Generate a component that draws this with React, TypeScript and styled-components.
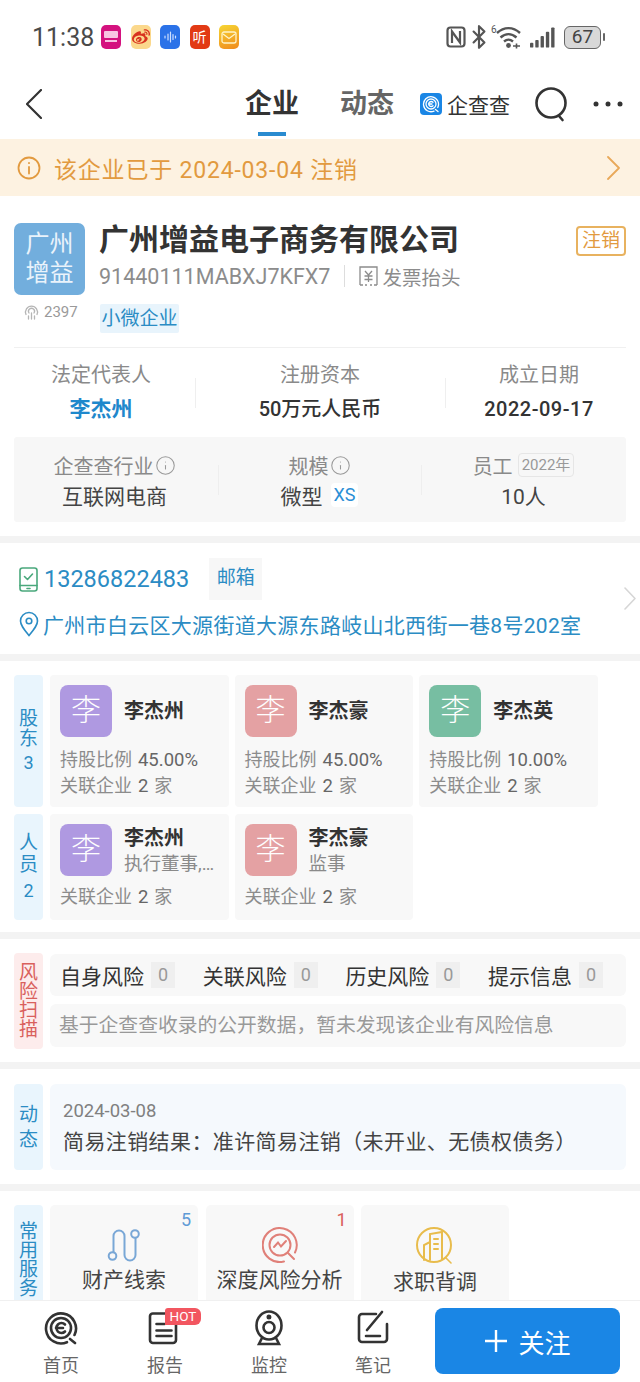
import React from 'react';
import styled, { createGlobalStyle } from 'styled-components';
import { Info, Bluetooth } from 'lucide-react';
import { FaWeibo } from 'react-icons/fa';

const GlobalStyle = createGlobalStyle`
  html, body {
    margin: 0;
    padding: 0;
    background: #ffffff;
  }
  * {
    box-sizing: border-box;
  }
`;

const Page = styled.div`
  width: 640px;
  height: 1382px;
  display: flex;
  flex-direction: column;
  overflow: hidden;
  background: #ffffff;
  font-family: Roboto, "Noto Sans CJK SC", sans-serif;
  color: #333333;
`;

const StatusBar = styled.div`
  height: 70px;
  flex: none;
  display: flex;
  align-items: center;
  padding: 4px 0 0 32px;
`;

const Clock = styled.span`
  font-size: 25px;
  color: #4a4a4a;
  width: 69px;
`;

const AppIcon = styled.span<{ $bg: string }>`
  width: 20px;
  height: 24px;
  margin-right: 9.5px;
  border-radius: 5px;
  background: ${(p) => p.$bg};
  display: flex;
  align-items: center;
  justify-content: center;
  color: #ffffff;
  font-size: 14px;
  line-height: 1;
  overflow: hidden;
`;

const StatusRight = styled.div`
  margin-left: auto;
  margin-right: 35px;
  display: flex;
  align-items: center;
  color: #555555;
`;

const Battery = styled.span`
  width: 37px;
  height: 23px;
  margin-left: 9px;
  border: 1.5px solid #666666;
  border-radius: 6px;
  background: #d8d8d8;
  font-size: 19px;
  line-height: 20px;
  text-align: center;
  color: #444444;
`;

const BatteryCap = styled.span`
  width: 2px;
  height: 8px;
  margin-left: 2px;
  background: #666666;
  border-radius: 1px;
`;

const NavBar = styled.div`
  height: 69px;
  flex: none;
  display: flex;
  align-items: center;
  padding: 0 0 2px 26px;
`;

const NavTabs = styled.div`
  margin-left: 203px;
  display: flex;
  gap: 40px;
`;

const NavTab = styled.span<{ $active?: boolean }>`
  position: relative;
  width: 55px;
  font-size: 27px;
  line-height: 40px;
  font-weight: 700;
  white-space: nowrap;
  color: ${(p) => (p.$active ? '#333333' : '#666666')};

  ${(p) =>
    p.$active &&
    `&::after {
      content: '';
      position: absolute;
      left: 13px;
      top: 48px;
      width: 28px;
      height: 4px;
      background: #2a8bd0;
    }`}
`;

const BrandLogo = styled.div`
  margin-left: 25px;
  display: flex;
  align-items: center;
  gap: 5px;
  font-size: 21px;
  color: #333333;
  white-space: nowrap;
`;

const BrandMark = styled.span`
  width: 22px;
  height: 22px;
  border-radius: 4px;
  background: #1a86e5;
  display: flex;
  align-items: center;
  justify-content: center;
`;

const NavAction = styled.span<{ $left: number }>`
  margin-left: ${(p) => p.$left}px;
  display: flex;
`;

const Banner = styled.div`
  height: 57px;
  flex: none;
  display: flex;
  align-items: center;
  padding: 0 20px 0 17px;
  background: #fdf2e1;
  color: #e29a3f;
  font-size: 23px;
  letter-spacing: 0.8px;
`;

const BannerText = styled.span`
  margin-left: 13px;
  flex: 1;
  white-space: nowrap;
`;

const Content = styled.div`
  flex: 1;
  min-height: 0;
  overflow: hidden;
`;

const Section = styled.section<{ $top: number; $bottom: number }>`
  padding: ${(p) => p.$top}px 14px ${(p) => p.$bottom}px;
  background: #ffffff;
  border-bottom: 7px solid #f3f3f3;
`;

const CompanyHead = styled.div`
  display: flex;
  gap: 14px;
  padding-bottom: 14px;
  border-bottom: 1px solid #f0f0f0;
`;

const LogoColumn = styled.div`
  width: 71px;
  flex: none;
`;

const CompanyLogo = styled.div`
  width: 71px;
  height: 72px;
  border-radius: 7px;
  background: #72aedd;
  color: #eaf3fb;
  font-size: 24px;
  line-height: 29px;
  text-align: center;
  padding: 7px 8px;
`;

const Heat = styled.div`
  margin: 8px 0 0 9px;
  display: flex;
  align-items: center;
  gap: 4px;
  font-size: 15px;
  color: #9a9a9a;
`;

const CompanyInfo = styled.div`
  flex: 1;
  min-width: 0;
`;

const TitleRow = styled.div`
  display: flex;
  justify-content: space-between;
`;

const CompanyName = styled.h1`
  margin: 0;
  font-size: 30px;
  line-height: 34px;
  font-weight: 700;
  color: #333333;
  white-space: nowrap;
`;

const StateBadge = styled.span`
  width: 50px;
  height: 30px;
  margin-top: 3px;
  border: 2px solid #e8b25f;
  border-radius: 4px;
  color: #e29a3f;
  font-size: 19px;
  line-height: 26px;
  text-align: center;
`;

const CodeRow = styled.div`
  margin-top: 4px;
  height: 30px;
  display: flex;
  align-items: center;
  color: #8c8c8c;
  font-size: 21.5px;
`;

const CodeDivider = styled.span`
  width: 1px;
  height: 22px;
  margin: 0 14px;
  background: #dddddd;
`;

const InvoiceText = styled.span`
  margin-left: 4px;
  font-size: 19.5px;
`;

const SizeTag = styled.div`
  margin: 13px 0 0 1px;
  height: 29px;
  width: 79px;
  background: #e8f4fc;
  color: #2b8cc4;
  font-size: 19px;
  line-height: 29px;
  text-align: center;
  border-radius: 2px;
`;

const KeyGrid = styled.div`
  margin: 0 -7px;
  padding: 13px 0 14px;
  display: grid;
  grid-template-columns: 188px 250px 188px;
`;

const KeyCell = styled.div<{ $divider?: boolean }>`
  position: relative;
  text-align: center;

  ${(p) =>
    p.$divider &&
    `&::before {
      content: '';
      position: absolute;
      left: 0;
      top: 17px;
      height: 30px;
      width: 1px;
      background: #efefef;
    }`}
`;

const KeyLabel = styled.div`
  font-size: 20px;
  line-height: 28px;
  color: #8a8a8a;
`;

const KeyValue = styled.div<{ $link?: boolean; $track?: number }>`
  margin-top: 6px;
  font-size: ${(p) => (p.$link ? 21 : 20)}px;
  line-height: 28px;
  letter-spacing: ${(p) => p.$track ?? 0}px;
  font-weight: ${(p) => (p.$link ? 700 : 500)};
  color: ${(p) => (p.$link ? '#1f88cc' : '#333333')};
`;

const MetaGrid = styled.div`
  padding: 14px 0 13px;
  background: #f7f7f7;
  border-radius: 3px;
  display: grid;
  grid-template-columns: 204px 203px 205px;
`;

const MetaCell = styled.div<{ $divider?: boolean }>`
  position: relative;
  text-align: center;

  &:first-child {
    padding-right: 3px;
  }

  ${(p) =>
    p.$divider &&
    `&::before {
      content: '';
      position: absolute;
      left: 0;
      top: 14px;
      height: 30px;
      width: 1px;
      background: #eeeeee;
    }`}
`;

const MetaLabel = styled.div`
  height: 28px;
  display: flex;
  align-items: center;
  justify-content: center;
  gap: 1px;
  font-size: 20px;
  color: #8a8a8a;
`;

const MetaValue = styled.div`
  margin-top: 2px;
  height: 28px;
  display: flex;
  align-items: center;
  justify-content: center;
  gap: 8px;
  font-size: 21px;
  color: #444444;
`;

const YearChip = styled.span`
  margin-left: 4px;
  padding: 0 3px;
  height: 24px;
  border: 1px solid #e6e6e6;
  border-radius: 4px;
  font-size: 15px;
  line-height: 22px;
  color: #999999;
`;

const XsChip = styled.span`
  padding: 0 3px;
  border-radius: 4px;
  background: #ffffff;
  color: #2b8fd6;
  font-size: 18px;
  line-height: 24px;
`;

const ContactSection = styled.section`
  display: flex;
  align-items: center;
  padding: 15px 4px 15px 19px;
  border-bottom: 7px solid #f3f3f3;
  color: #2b8cc4;
`;

const ContactBody = styled.div`
  flex: 1;
  min-width: 0;
`;

const PhoneRow = styled.div`
  height: 42px;
  display: flex;
  align-items: center;
`;

const PhoneNumber = styled.span`
  margin-left: 6px;
  font-size: 23.5px;
`;

const MailChip = styled.span`
  margin-left: 20px;
  width: 53px;
  height: 42px;
  background: #f7f7f7;
  font-size: 19px;
  line-height: 40px;
  text-align: center;
`;

const AddressRow = styled.div`
  margin-top: 9px;
  height: 30px;
  display: flex;
  align-items: center;
  gap: 4px;
  font-size: 21px;
  letter-spacing: 0.3px;
  white-space: nowrap;
`;

const Block = styled.div<{ $gap?: number }>`
  display: flex;
  gap: 7px;
  margin-top: ${(p) => p.$gap ?? 0}px;
`;

const SideLabel = styled.div<{ $tone?: 'blue' | 'red'; $leading: number }>`
  width: 29px;
  flex: none;
  display: flex;
  flex-direction: column;
  align-items: center;
  justify-content: center;
  border-radius: 4px;
  font-size: 19px;
  line-height: ${(p) => p.$leading}px;
  background: ${(p) => (p.$tone === 'red' ? '#fdecec' : '#e9f5fd')};
  color: ${(p) => (p.$tone === 'red' ? '#d9605c' : '#2b8cc4')};
`;

const SideCount = styled.span`
  margin-top: 4px;
  font-size: 18px;
`;

const PeopleGrid = styled.div`
  flex: 1;
  max-width: 548px;
  display: grid;
  grid-template-columns: repeat(3, 178.6px);
  column-gap: 6px;
`;

const PersonCard = styled.div<{ $pad: number }>`
  padding: 10px 10px ${(p) => p.$pad}px;
  background: #f8f8f8;
  border-radius: 4px;
  min-width: 0;
`;

const PersonHead = styled.div`
  display: flex;
  align-items: center;
  gap: 12px;
`;

const Avatar = styled.div<{ $bg: string }>`
  width: 52px;
  height: 52px;
  flex: none;
  border-radius: 8px;
  background: ${(p) => p.$bg};
  color: #ffffff;
  opacity: 0.92;
  font-size: 30px;
  line-height: 50px;
  text-align: center;
  font-weight: 300;
`;

const PersonNames = styled.div`
  min-width: 0;
  flex: 1;
`;

const PersonName = styled.div`
  font-size: 20px;
  line-height: 28px;
  font-weight: 700;
  color: #333333;
`;

const PersonRole = styled.div`
  font-size: 18.5px;
  line-height: 24px;
  color: #8a8a8a;
  white-space: nowrap;
`;

const StatList = styled.div<{ $top: number }>`
  margin-top: ${(p) => p.$top}px;
`;

const StatLine = styled.div`
  font-size: 18px;
  line-height: 26px;
  word-spacing: 1.5px;
  color: #8c8c8c;
  white-space: nowrap;
`;

const StatNum = styled.span`
  font-size: 18.5px;
  color: #666666;
`;

const RiskBody = styled.div`
  flex: 1;
  min-width: 0;
  display: flex;
  flex-direction: column;
  gap: 8px;
  padding: 1px 0 2px;
`;

const RiskRow = styled.div`
  height: 42px;
  padding-left: 10px;
  background: #f8f8f8;
  border-radius: 6px;
  display: grid;
  grid-template-columns: repeat(3, 142.7px) 1fr;
  align-items: center;
`;

const RiskItem = styled.div`
  display: flex;
  align-items: center;
  gap: 7px;
  font-size: 21px;
  color: #333333;
`;

const RiskCount = styled.span`
  width: 24px;
  height: 26px;
  background: #efefef;
  color: #999999;
  font-size: 18px;
  line-height: 26px;
  text-align: center;
`;

const RiskNote = styled.div`
  height: 43px;
  padding-left: 9px;
  background: #f8f8f8;
  border-radius: 6px;
  font-size: 19.8px;
  line-height: 43px;
  color: #999999;
  white-space: nowrap;
`;

const NewsPanel = styled.div`
  flex: 1;
  height: 86px;
  padding: 13px 13px 0;
  background: #f5f9fd;
  border-radius: 6px;
`;

const NewsDate = styled.div`
  font-size: 18.5px;
  line-height: 28px;
  color: #808080;
`;

const NewsText = styled.div`
  margin-top: 3px;
  font-size: 21px;
  line-height: 28px;
  letter-spacing: 0.4px;
  color: #444444;
  white-space: nowrap;
`;

const ServiceGrid = styled.div`
  display: flex;
  gap: 7.5px;
`;

const ServiceCard = styled.div`
  position: relative;
  width: 148px;
  height: 110px;
  padding-top: 22px;
  background: #f8f8f8;
  border-radius: 5px;
  display: flex;
  flex-direction: column;
  align-items: center;
`;

const ServiceCount = styled.span<{ $color: string }>`
  position: absolute;
  top: 2px;
  right: 7px;
  font-size: 18px;
  line-height: 26px;
  color: ${(p) => p.$color};
`;

const ServiceName = styled.div`
  margin-top: 3px;
  font-size: 21px;
  line-height: 28px;
  color: #444444;
  white-space: nowrap;
`;

const Footer = styled.footer`
  height: 82px;
  flex: none;
  display: flex;
  background: #ffffff;
  border-top: 1px solid #f0f0f0;
  padding-left: 9px;
`;

const FooterTab = styled.div`
  position: relative;
  width: 104px;
  padding-top: 9px;
  display: flex;
  flex-direction: column;
  align-items: center;
  font-size: 18px;
  color: #666666;
`;

const FooterLabel = styled.span`
  margin-top: 7px;
  line-height: 26px;
`;

const HotBadge = styled.span`
  position: absolute;
  top: 7px;
  left: 52px;
  width: 36px;
  height: 17px;
  border-radius: 3px 6px 6px 0;
  background: #f25660;
  color: #ffffff;
  font-size: 13.5px;
  line-height: 17px;
  text-align: center;
`;

const FollowButton = styled.button`
  margin: 7px 0 0 10px;
  width: 185px;
  height: 66px;
  border: none;
  border-radius: 8px;
  background: #1a86e5;
  color: #ffffff;
  font-family: inherit;
  font-size: 26px;
  display: flex;
  align-items: center;
  justify-content: center;
  gap: 10px;
`;

const stats = ['李杰州', '李杰豪', '李杰英'];
const holders = [
  { name: stats[0], color: '#a992e0', share: '45.00%' },
  { name: stats[1], color: '#e39a9c', share: '45.00%' },
  { name: stats[2], color: '#6dba9b', share: '10.00%' },
];
const staff = [
  { name: stats[0], color: '#a992e0', role: '执行董事,…' },
  { name: stats[1], color: '#e39a9c', role: '监事' },
];
const risks = ['自身风险', '关联风险', '历史风险', '提示信息'];
const riskNote = '基于企查查收录的公开数据\uFF0C暂未发现该企业有风险信息';
const newsText = '简易注销结果\uFF1A准许简易注销\uFF08未开业、无债权债务\uFF09';

const LogoGlyph = ({ size, color }: { size: number; color: string }) => (
  <svg width={size} height={size} viewBox="0 0 36 36" fill="none" stroke={color} strokeWidth="2.6" strokeLinecap="round">
    <path d="M24 32.2A15 15 0 1 1 31.5 25M27 29l5 4" />
    <circle cx="18" cy="18" r="10" />
    <path d="M22 14.5a5 5 0 1 0 0 7M13 18h7" />
  </svg>
);

const InfoIcon = () => <Info size={21} strokeWidth={1.2} color="#999999" />;

const Chevron = ({ dir, width, height, color, weight }: { dir: 'left' | 'right'; width: number; height: number; color: string; weight: number }) => (
  <svg width={width} height={height} viewBox={`0 0 ${width} ${height}`} fill="none" stroke={color} strokeWidth={weight} strokeLinecap="round" strokeLinejoin="round">
    <path
      d={
        dir === 'left'
          ? `M${width - 1} 1L1 ${height / 2}L${width - 1} ${height - 1}`
          : `M1 1L${width - 1} ${height / 2}L1 ${height - 1}`
      }
    />
  </svg>
);

const App = () => {
  return (
    <Page>
      <GlobalStyle />
      <StatusBar>
        <Clock>11:38</Clock>
        <AppIcon $bg="#d4127f">
          <svg width="16" height="16" viewBox="0 0 16 16" fill="#f8c4e2">
            <rect x="1" y="2" width="14" height="7" rx="1" />
            <rect x="2" y="11" width="12" height="2" />
          </svg>
        </AppIcon>
        <AppIcon $bg="#fbd88c">
          <FaWeibo size={18} color="#d8321f" />
        </AppIcon>
        <AppIcon $bg="#2b72e8">
          <svg width="14" height="14" viewBox="0 0 14 14" stroke="#cfe0ff" strokeWidth="1.2" strokeLinecap="round">
            <path d="M2 6v2M5 4v6M7.500 2v10M10 4.500v5M12.500 6v2" />
          </svg>
        </AppIcon>
        <AppIcon $bg="#e23a14">听</AppIcon>
        <AppIcon $bg="linear-gradient(160deg,#f6d633,#f08a1d)">
          <svg width="16" height="13" viewBox="0 0 16 13" fill="none" stroke="#fff3c8" strokeWidth="1.3">
            <rect x="1" y="1" width="14" height="11" rx="2" />
            <path d="M2 3l6 4.500L14 3" />
          </svg>
        </AppIcon>
        <StatusRight>
          <svg width="20" height="24" viewBox="0 0 20 24" fill="none" stroke="#555555" strokeWidth="2.2">
            <rect x="1.500" y="2.500" width="17" height="19" rx="3" />
            <path d="M6 18V6.500l8 11V6" />
          </svg>
          <Bluetooth size={26} strokeWidth={2} />
          <svg width="30" height="24" viewBox="0 0 30 24" fill="none" stroke="#555555" strokeWidth="2.4" style={{ marginLeft: -1 }}>
            <text x="0" y="8" fontSize="10" fill="#555555" stroke="none">6</text>
            <path d="M6 8c7-6.500 16-6.500 23 0M9.500 12.500c5-4.500 11-4.500 16 0M13 16.500c3-2.500 6-2.500 9 0" />
            <circle cx="17.500" cy="20.500" r="2.400" fill="#555555" stroke="none" />
            <path d="M22 21h7M25.500 18.500v5" strokeWidth="1.600" />
          </svg>
          <svg width="25" height="23" viewBox="0 0 26 23" fill="#555555" style={{ marginLeft: 9 }}>
            <rect x="0" y="17" width="3.500" height="5" rx="1" />
            <rect x="5.500" y="14" width="3.500" height="8" rx="1" />
            <rect x="11" y="10" width="3.500" height="12" rx="1" />
            <rect x="16.500" y="5.500" width="3.500" height="16.500" rx="1" />
            <rect x="22" y="1" width="3.500" height="21" rx="1" />
          </svg>
          <Battery>67</Battery>
          <BatteryCap />
        </StatusRight>
      </StatusBar>

      <NavBar>
        <Chevron dir="left" width={16} height={30} color="#333333" weight={2.2} />
        <NavTabs>
          <NavTab $active>企业</NavTab>
          <NavTab>动态</NavTab>
        </NavTabs>
        <BrandLogo>
          <BrandMark>
            <LogoGlyph size={18} color="#ffffff" />
          </BrandMark>
          企查查
        </BrandLogo>
        <NavAction $left={24}>
          <svg width="34" height="38" viewBox="0 0 34 38" fill="none" stroke="#333333" strokeWidth="2.6" strokeLinecap="round">
            <circle cx="17" cy="18" r="14.500" />
            <path d="M25 31l3.500 4" />
          </svg>
        </NavAction>
        <NavAction $left={25}>
          <svg width="30" height="6" viewBox="0 0 30 6" fill="#333333">
            <circle cx="3" cy="3" r="2.500" />
            <circle cx="15" cy="3" r="2.500" />
            <circle cx="27" cy="3" r="2.500" />
          </svg>
        </NavAction>
      </NavBar>

      <Banner>
        <svg width="24" height="24" viewBox="0 0 24 24" fill="none" stroke="#e29a3f" strokeWidth="1.800" strokeLinecap="round">
          <circle cx="12" cy="12" r="10.500" />
          <path d="M12 11v6.500M12 6.800v.4" />
        </svg>
        <BannerText>该企业已于 2024-03-04 注销</BannerText>
        <Chevron dir="right" width={13} height={24} color="#e8a959" weight={1.8} />
      </Banner>

      <Content>
        <Section $top={27} $bottom={14}>
          <CompanyHead>
            <LogoColumn>
              <CompanyLogo>广州增益</CompanyLogo>
              <Heat>
                <svg width="17" height="17" viewBox="0 0 17 17" fill="none" stroke="#b5b5b5" strokeWidth="1.300" strokeLinecap="round">
                  <path d="M3 10.500a6 6 0 1 1 11 0M6 9a3 3 0 1 1 5 0M8.500 9v6M5.500 12v3M11.500 12v3" />
                </svg>
                2397
              </Heat>
            </LogoColumn>
            <CompanyInfo>
              <TitleRow>
                <CompanyName>广州增益电子商务有限公司</CompanyName>
                <StateBadge>注销</StateBadge>
              </TitleRow>
              <CodeRow>
                91440111MABXJ7KFX7
                <CodeDivider />
                <svg width="19" height="20" viewBox="0 0 19 20" fill="none" stroke="#8c8c8c" strokeWidth="1.300">
                  <path d="M1 19V1h17v18" />
                  <path d="M1 19h3M6 19h2M11 19h2M15 19h3" />
                  <path d="M6 5l3.500 4L13 5M5.500 10h8M5.500 13.500h8M9.500 9v7" />
                </svg>
                <InvoiceText>发票抬头</InvoiceText>
              </CodeRow>
              <SizeTag>小微企业</SizeTag>
            </CompanyInfo>
          </CompanyHead>

          <KeyGrid>
            <KeyCell>
              <KeyLabel>法定代表人</KeyLabel>
              <KeyValue $link>李杰州</KeyValue>
            </KeyCell>
            <KeyCell $divider>
              <KeyLabel>注册资本</KeyLabel>
              <KeyValue>50万元人民币</KeyValue>
            </KeyCell>
            <KeyCell $divider>
              <KeyLabel>成立日期</KeyLabel>
              <KeyValue $track={0.5}>2022-09-17</KeyValue>
            </KeyCell>
          </KeyGrid>

          <MetaGrid>
            <MetaCell>
              <MetaLabel>
                企查查行业
                <InfoIcon />
              </MetaLabel>
              <MetaValue>互联网电商</MetaValue>
            </MetaCell>
            <MetaCell $divider>
              <MetaLabel>
                规模
                <InfoIcon />
              </MetaLabel>
              <MetaValue>
                微型
                <XsChip>XS</XsChip>
              </MetaValue>
            </MetaCell>
            <MetaCell $divider>
              <MetaLabel>
                员工
                <YearChip>2022年</YearChip>
              </MetaLabel>
              <MetaValue>10人</MetaValue>
            </MetaCell>
          </MetaGrid>
        </Section>

        <ContactSection>
          <ContactBody>
            <PhoneRow>
              <svg width="19" height="25" viewBox="0 0 19 25" fill="none" stroke="#4aa87c" strokeWidth="1.600" strokeLinecap="round" strokeLinejoin="round">
                <rect x="1" y="1" width="17" height="23" rx="2.500" />
                <path d="M1 18.500h17M5.500 9.500l3 3 5-5.500M8 21.500h3" />
              </svg>
              <PhoneNumber>13286822483</PhoneNumber>
              <MailChip>邮箱</MailChip>
            </PhoneRow>
            <AddressRow>
              <svg width="20" height="26" viewBox="0 0 20 26" fill="none" stroke="#2b8cc4" strokeWidth="1.600">
                <path d="M10 24.500C5 18.500 1.500 14.500 1.500 10a8.500 8.500 0 0 1 17 0c0 4.500-3.500 8.500-8.500 14.500z" />
                <circle cx="10" cy="10" r="2.800" />
              </svg>
              广州市白云区大源街道大源东路岐山北西街一巷8号202室
            </AddressRow>
          </ContactBody>
          <Chevron dir="right" width={12} height={23} color="#d6d6d6" weight={1.6} />
        </ContactSection>

        <Section $top={14} $bottom={12}>
          <Block>
            <SideLabel $leading={20}>
              <span>股</span>
              <span>东</span>
              <SideCount>3</SideCount>
            </SideLabel>
            <PeopleGrid>
              {holders.map((holder) => (
                <PersonCard key={holder.name} $pad={8}>
                  <PersonHead>
                    <Avatar $bg={holder.color}>李</Avatar>
                    <PersonName>{holder.name}</PersonName>
                  </PersonHead>
                  <StatList $top={10}>
                    <StatLine>
                      持股比例 <StatNum>{holder.share}</StatNum>
                    </StatLine>
                    <StatLine>
                      关联企业 <StatNum>2</StatNum> 家
                    </StatLine>
                  </StatList>
                </PersonCard>
              ))}
            </PeopleGrid>
          </Block>
          <Block $gap={7}>
            <SideLabel $leading={22}>
              <span>人</span>
              <span>员</span>
              <SideCount>2</SideCount>
            </SideLabel>
            <PeopleGrid>
              {staff.map((person) => (
                <PersonCard key={person.name} $pad={10}>
                  <PersonHead>
                    <Avatar $bg={person.color}>李</Avatar>
                    <PersonNames>
                      <PersonName>{person.name}</PersonName>
                      <PersonRole>{person.role}</PersonRole>
                    </PersonNames>
                  </PersonHead>
                  <StatList $top={8}>
                    <StatLine>
                      关联企业 <StatNum>2</StatNum> 家
                    </StatLine>
                  </StatList>
                </PersonCard>
              ))}
            </PeopleGrid>
          </Block>
        </Section>

        <Section $top={14} $bottom={13}>
          <Block>
            <SideLabel $tone="red" $leading={19}>
              <span>风</span>
              <span>险</span>
              <span>扫</span>
              <span>描</span>
            </SideLabel>
            <RiskBody>
              <RiskRow>
                {risks.map((risk) => (
                  <RiskItem key={risk}>
                    {risk}
                    <RiskCount>0</RiskCount>
                  </RiskItem>
                ))}
              </RiskRow>
              <RiskNote>{riskNote}</RiskNote>
            </RiskBody>
          </Block>
        </Section>

        <Section $top={15} $bottom={14}>
          <Block>
            <SideLabel $leading={25}>
              <span>动</span>
              <span>态</span>
            </SideLabel>
            <NewsPanel>
              <NewsDate>2024-03-08</NewsDate>
              <NewsText>{newsText}</NewsText>
            </NewsPanel>
          </Block>
        </Section>

        <Section $top={14} $bottom={0}>
          <Block>
            <SideLabel $leading={19}>
              <span>常</span>
              <span>用</span>
              <span>服</span>
              <span>务</span>
            </SideLabel>
            <ServiceGrid>
              <ServiceCard>
                <ServiceCount $color="#5f9bd6">5</ServiceCount>
                <svg width="36" height="36" viewBox="0 0 36 36" fill="none" stroke="#79a7d6" strokeWidth="2">
                  <circle cx="6.500" cy="29" r="3.800" />
                  <circle cx="29" cy="7" r="3.800" />
                  <path d="M7.500 25V9a5.500 5.500 0 0 1 11 0v19a5.500 5.500 0 0 0 11 0V11" />
                </svg>
                <ServiceName>财产线索</ServiceName>
              </ServiceCard>
              <ServiceCard>
                <ServiceCount $color="#d9605c">1</ServiceCount>
                <svg width="36" height="36" viewBox="0 0 36 36" fill="none" stroke="#e08079" strokeWidth="2" strokeLinecap="round">
                  <path d="M22 34.500A17 17 0 1 1 33 25.500" />
                  <circle cx="18" cy="18" r="10.500" />
                  <path d="M12 20l4-4.500 3 4 5-5.500M26 26l6 6" />
                </svg>
                <ServiceName>深度风险分析</ServiceName>
              </ServiceCard>
              <ServiceCard>
                <svg width="38" height="38" viewBox="0 0 38 38" fill="none" stroke="#e8bc4c" strokeWidth="2" strokeLinecap="round">
                  <circle cx="18" cy="18" r="17" />
                  <path d="M30 31l5 5" strokeWidth="1.600" />
                  <path d="M8 33V18l6-3M14 33V7l12-2v27" />
                  <path d="M18 12h4M18 17h4M18 22h4" />
                </svg>
                <ServiceName>求职背调</ServiceName>
              </ServiceCard>
            </ServiceGrid>
          </Block>
        </Section>
      </Content>

      <Footer>
        <FooterTab>
          <LogoGlyph size={36} color="#333333" />
          <FooterLabel>首页</FooterLabel>
        </FooterTab>
        <FooterTab>
          <svg width="36" height="36" viewBox="0 0 36 36" fill="none" stroke="#333333" strokeWidth="2.600" strokeLinecap="round">
            <path d="M8 3.500h18a4 4 0 0 1 3 2.500v24a3 3 0 0 1-3 3H6a3 3 0 0 1-3-3V6a3 3 0 0 1 3-2.500z" />
            <path d="M9.500 14h8M9.500 20.500h15M9.500 26h15" />
          </svg>
          <HotBadge>HOT</HotBadge>
          <FooterLabel>报告</FooterLabel>
        </FooterTab>
        <FooterTab>
          <svg width="36" height="36" viewBox="0 0 36 36" fill="none" stroke="#333333" strokeWidth="2.600" strokeLinecap="round">
            <ellipse cx="18" cy="15.500" rx="12.500" ry="14" />
            <circle cx="18" cy="17.500" r="5.500" />
            <circle cx="18" cy="7" r="1.200" fill="#333333" />
            <path d="M11 28l-3 6h20l-3-6" />
          </svg>
          <FooterLabel>监控</FooterLabel>
        </FooterTab>
        <FooterTab>
          <svg width="36" height="36" viewBox="0 0 36 36" fill="none" stroke="#333333" strokeWidth="2.600" strokeLinecap="round">
            <path d="M21 4H7a3 3 0 0 0-3 3v22a3 3 0 0 0 3 3h22a3 3 0 0 0 3-3V14" />
            <path d="M12 20L27 2M11 26h14" />
          </svg>
          <FooterLabel>笔记</FooterLabel>
        </FooterTab>
        <FollowButton>
          <svg width="24" height="24" viewBox="0 0 24 24" stroke="#ffffff" strokeWidth="2.400">
            <path d="M12 1v22M1 12h22" />
          </svg>
          关注
        </FollowButton>
      </Footer>
    </Page>
  );
};

export default App;
